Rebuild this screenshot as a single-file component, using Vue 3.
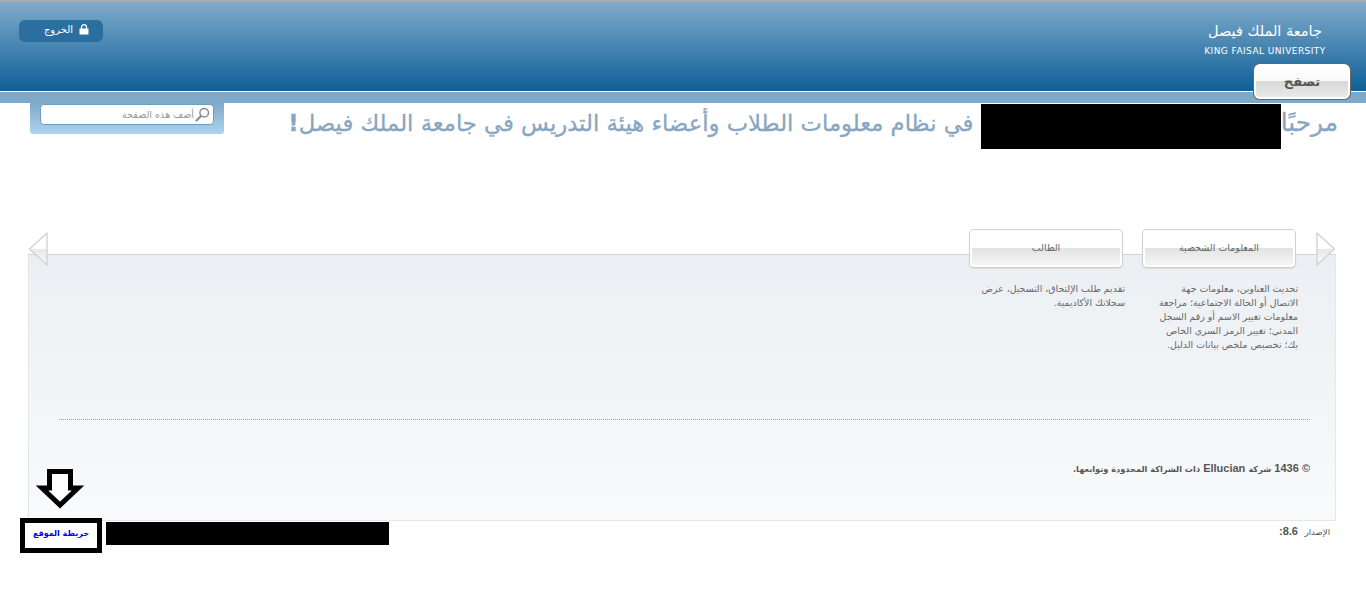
<script setup>
const cards = [
  { title: 'المعلومات الشخصية', text: 'تحديث العناوين، معلومات جهة\nالاتصال أو الحالة الاجتماعية؛ مراجعة\nمعلومات تغيير الاسم أو رقم السجل\nالمدني؛ تغيير الرمز السري الخاص\nبك؛ تخصيص ملخص بيانات الدليل.' },
  { title: 'الطالب', text: 'تقديم طلب الإلتحاق، التسجيل، عرض\nسجلاتك الأكاديمية.' }
]
</script>

<template>
  <div class="page" dir="rtl">
    <header class="top">
      <div class="head">
        <div class="logo">
          <div class="logo-ar">جامعة الملك فيصل</div>
          <div class="logo-en" dir="ltr">KING FAISAL UNIVERSITY</div>
        </div>
        <a class="exit">
          <svg width="10" height="11" viewBox="0 0 10 11"><path d="M2.5 5V3.2a2.5 2.5 0 0 1 5 0V5" fill="none" stroke="#fff" stroke-width="1.3"/><rect x="0.5" y="4.5" width="9" height="6" fill="#fff"/></svg>
          <span>الخروج</span>
        </a>
      </div>
      <div class="band"></div>
      <button class="browse"><span>تصفح</span></button>
    </header>

    <section class="welcome">
      <h1 class="title"><span class="hello">مرحبًا</span><i class="redact-name"></i> في نظام معلومات الطلاب وأعضاء هيئة التدريس في جامعة الملك فيصل<b>!</b></h1>
      <div class="search">
        <div class="search-box">
          <svg width="15" height="15" viewBox="0 0 15 15"><circle cx="9.2" cy="5.800" r="4.3" fill="#fff" stroke="#8a8a8a" stroke-width="1.5"/><path d="M6 9 1.5 13.5" stroke="#8a8a8a" stroke-width="2.2" stroke-linecap="round"/></svg>
          <span>أضف هذه الصفحة</span>
        </div>
      </div>
    </section>

    <main class="panel">
      <svg class="nav-arrow right" width="20" height="35" viewBox="0 0 20 35"><defs><linearGradient id="ar" x1="0" y1="0" x2="0" y2="1"><stop offset="0.5" stop-color="#fff"/><stop offset="0.5" stop-color="#e8e8e8"/><stop offset="1" stop-color="#f8f8f8"/></linearGradient></defs><path d="M1 1 18.500 17 1 33Z" fill="url(#ar)" stroke="#d2d2d2" stroke-width="1.4" stroke-linejoin="round"/></svg>
      <svg class="nav-arrow left" width="20" height="35" viewBox="0 0 20 35"><path d="M19 1 1.500 17 19 33Z" fill="url(#ar)" stroke="#d2d2d2" stroke-width="1.4" stroke-linejoin="round"/></svg>

      <div class="cards">
        <article v-for="c in cards" :key="c.title" class="card">
          <div class="card-btn"><span>{{ c.title }}</span></div>
          <p class="card-text">{{ c.text }}</p>
        </article>
      </div>

      <div class="rule"></div>
      <p class="copy">© 1436 <span class="copy-ar">شركة</span> Ellucian <span class="copy-ar">ذات الشراكة المحدودة وتوابعها.</span></p>
    </main>

    <footer class="foot">
      <div class="version"><span class="v-label">الإصدار</span> <b>8.6:</b></div>
      <div class="foot-left">
        <i class="redact-foot"></i>
        <div class="sitemap-wrap">
          <svg class="down" width="48" height="41" viewBox="0 0 48 41"><path d="M13.500 2.500H34.500V19H42L24 36 6 19H13.500Z" fill="#fff" stroke="#000" stroke-width="5"/></svg>
          <a class="sitemap">خريطة الموقع</a>
        </div>
      </div>
    </footer>
  </div>
</template>

<style scoped>
.page {
  width: 1366px;
  height: 609px;
  position: relative;
  overflow: hidden;
  background: #fff;
  font-family: "DejaVu Sans", "Liberation Sans", sans-serif;
}
.top { position: relative; }
.head {
  height: 89px;
  border-top: 2px solid #b0aaa6;
  background: linear-gradient(#7eabca, #0f5f98);
  display: flex;
  justify-content: space-between;
  padding: 0 19px 0 19px;
  box-sizing: content-box;
}
.band {
  height: 11px;
  border-top: 1px solid #fff;
  background: #7fa9c8;
}
.logo {
  width: 122px;
  margin: 19px 21px 0 0;
  text-align: center;
  color: #fff;
}
.logo-ar { font-size: 14.5px; line-height: 20px; }
.logo-en { font-size: 9px; line-height: 12px; margin-top: 4px; letter-spacing: 0.45px; white-space: nowrap; font-family: "DejaVu Sans", sans-serif; }
.exit {
  width: 84px;
  height: 22px;
  margin-top: 18px;
  border-radius: 6px;
  background: #2a6f9f;
  color: #fff;
  font-size: 10px;
  display: flex;
  align-items: center;
  gap: 6px;
  padding: 0 14px 3px 0;
  box-sizing: border-box;
}
.browse {
  position: absolute;
  top: 64px;
  right: 16px;
  width: 96px;
  height: 35px;
  padding: 0;
  border: 2px solid #fff;
  border-radius: 6px;
  box-shadow: 0 0 0 1px #666;
  background: linear-gradient(#fff 0, #f8f8f8 50%, #d8d8d8 50%, #e9e9e9 100%);
  color: #555;
  font: bold 13px "DejaVu Sans", sans-serif;
}
.welcome {
  display: flex;
  justify-content: space-between;
  padding: 0 28px 0 30px;
  align-items: flex-start;
  height: 126px;
}
.title {
  margin: 0;
  font-size: 22.7px;
  line-height: 40px;
  height: 45px;
  font-weight: normal;
  color: #88a6c1;
  white-space: nowrap;
  -webkit-text-stroke: 0.3px #88a6c1;
}
.hello { font-size: 24.8px; }
.redact-name {
  display: inline-block;
  width: 300px;
  height: 45px;
  background: #000;
  vertical-align: top;
  margin: 1px 0 -8px;
}
.search {
  width: 194px;
  height: 31px;
  box-sizing: border-box;
  padding: 1px 10px 0;
  background: linear-gradient(#7fa9c8, #aed4ee);
  border-radius: 0 0 3px 3px;
  flex: none;
}
.search-box {
  height: 21px;
  background: #fff;
  border: 1px solid #6f9dbd;
  border-radius: 4px;
  box-sizing: border-box;
  display: flex;
  align-items: center;
  gap: 1px;
  padding-right: 3px;
  color: #999;
  font-size: 9.6px;
}
.panel {
  position: relative;
  width: 1308px;
  height: 267px;
  margin: 25px 30px 0 28px;
  box-sizing: border-box;
  border: 1px solid #e4e8ee;
  border-top-color: #c9d6e2;
  background: linear-gradient(#ebeff3, #f9fafb);
}
.nav-arrow { position: absolute; top: -23px; }
.nav-arrow.right { right: -1px; }
.nav-arrow.left { left: -1px; }
.cards {
  display: flex;
  gap: 21px;
  margin-top: -25px;
  padding-right: 40px;
  height: 189px;
  position: relative;
}
.card { width: 152px; }
.card-btn {
  height: 37px;
  box-sizing: border-box;
  border: 2px solid #fff;
  border-radius: 4px;
  box-shadow: 0 0 0 1px #cfcfcf, 0 1px 2px #bbb;
  background: linear-gradient(#fff 0, #fff 47%, #e2e2e2 47%, #f5f5f5 100%);
  color: #666;
  font-size: 9.5px;
  display: flex;
  align-items: center;
  justify-content: center;
  padding-bottom: 3px;
}
.card-text {
  margin: 15px -3px 0 0;
  font-size: 9.4px;
  line-height: 14px;
  color: #666;
  white-space: pre-line;
}
.rule {
  height: 0;
  margin: 0 25px 0 30px;
  border-top: 1px dotted #9a9a9a;
}
.copy {
  margin: 42px 25px 0 0;
  font: bold 11px "Liberation Sans", "DejaVu Sans", sans-serif;
  color: #555;
}
.copy-ar { font-size: 8.2px; font-family: "DejaVu Sans", sans-serif; }
.foot {
  display: flex;
  justify-content: space-between;
  padding: 0 36px 0 264px;
  position: relative;
}
.version { margin-top: 4px; font-size: 8.5px; color: #555; }
.version b { font-size: 11px; font-family: "Liberation Sans", sans-serif; margin-right: 4px; }
.foot-left { display: flex; align-items: flex-start; gap: 4px; margin-left: -244px; }
.redact-foot { display: block; width: 283px; height: 23px; margin-top: 1px; background: #000; }
.sitemap-wrap { position: relative; }
.sitemap {
  display: flex;
  align-items: center;
  justify-content: center;
  width: 82px;
  height: 35px;
  margin-top: -3px;
  padding-bottom: 5px;
  box-sizing: border-box;
  border: 5px solid #000;
  background: #fff;
  color: #00f;
  font-size: 8px;
  font-weight: bold;
}
.down { position: absolute; left: 16px; top: -52px; }
</style>
